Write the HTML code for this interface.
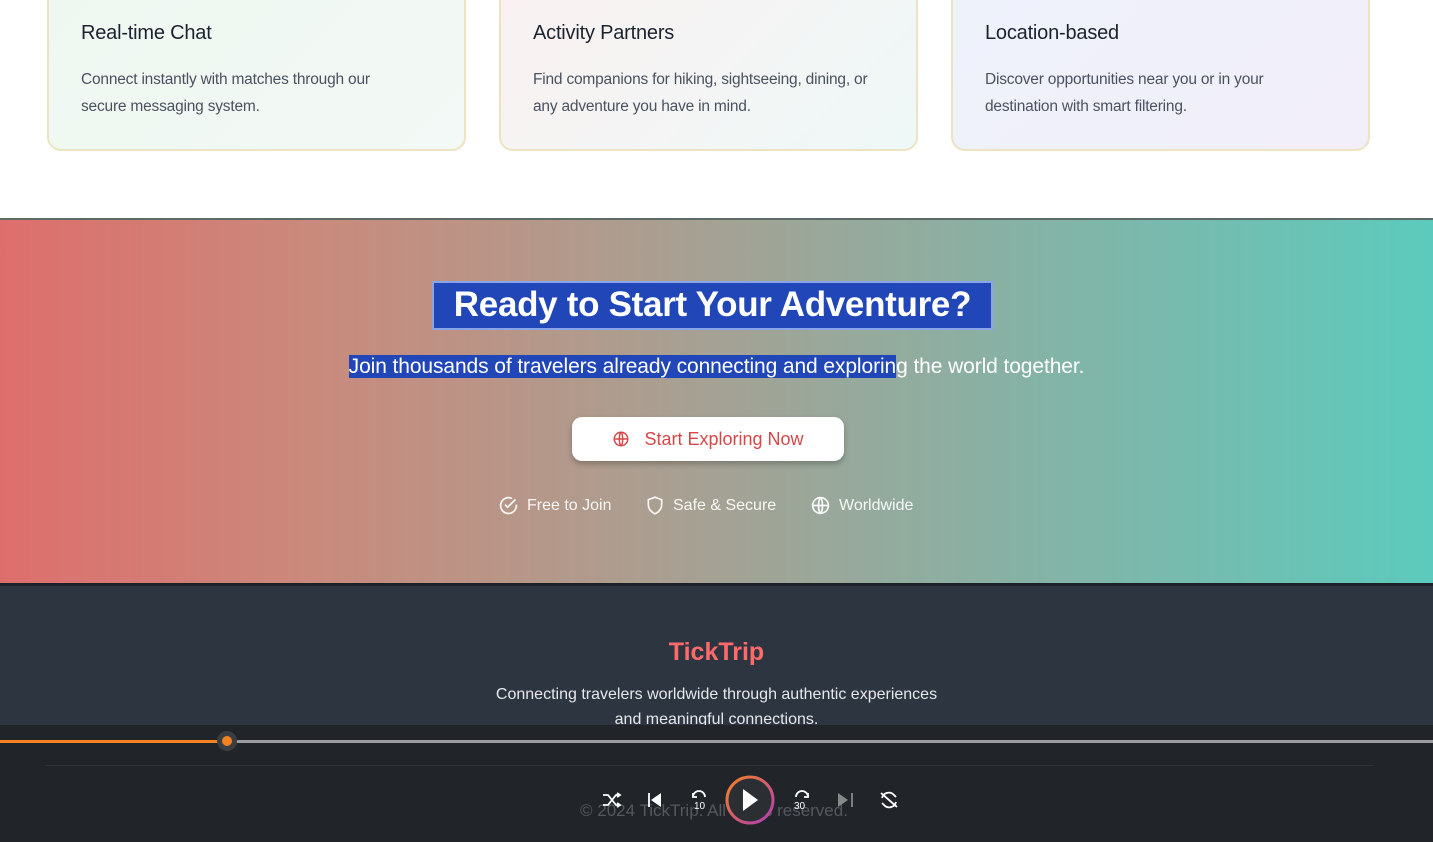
<!DOCTYPE html>
<html><head><meta charset="utf-8"><style>
*{margin:0;padding:0;box-sizing:border-box}
body{width:1433px;height:842px;overflow:hidden;background:#fff;font-family:"Liberation Sans",sans-serif;position:relative}
.card{position:absolute;top:-20px;width:419px;height:171px;border:2px solid #ece3c2;border-radius:14px}
.card h3{position:absolute;top:40px;left:32px;font-size:20px;font-weight:normal;color:#1b2330;letter-spacing:-0.2px}
.card p{position:absolute;top:84px;left:32px;width:330px;font-size:15.5px;line-height:27px;color:#4a5260;letter-spacing:-0.2px}
.cta{position:absolute;top:218px;left:0;width:1433px;height:365px;background:linear-gradient(90deg,#de6e6c 0%,#c98a7c 22%,#ab9e90 45%,#8fada0 65%,#73bdb0 85%,#5ccbbd 100%);border-top:2px solid #5c6b68}
.t{position:absolute;left:432px;top:61px;width:561px;height:49px;background:#2146b8;border:2px solid #8aa4e8;color:#fff;font-size:35px;font-weight:bold;text-align:center;line-height:44px;letter-spacing:-0.3px}
.s{position:absolute;top:135px;left:0;width:1433px;text-align:center;color:#fff;font-size:21px;letter-spacing:-0.1px}
.s span{background:#2146b8}
.btn{position:absolute;left:572px;top:197px;width:272px;height:44px;background:#fff;border-radius:10px;box-shadow:0 3px 6px rgba(0,0,0,.25);color:#d64848;font-size:18px;display:flex;align-items:center;justify-content:center;gap:14px}
.feat{position:absolute;top:275px;color:#fff;font-size:16px;display:flex;align-items:center;gap:8px;opacity:.92}
.foot{position:absolute;top:583px;left:0;width:1433px;height:142px;background:#2d3540;border-top:3px solid #1c2027}
.logo{position:absolute;top:52px;width:100%;text-align:center;color:#ff6b6b;font-size:25px;font-weight:bold}
.fp{position:absolute;top:96px;width:100%;text-align:center;color:#e6e8ea;font-size:16px;line-height:25px}
.player{position:absolute;top:725px;left:0;width:1433px;height:117px;background:#212428}
</style></head><body>
<div class="card" style="left:47px;background:linear-gradient(135deg,#eef8f0,#f3f9f6)"><h3>Real-time Chat</h3><p>Connect instantly with matches through our secure messaging system.</p></div>
<div class="card" style="left:499px;background:linear-gradient(135deg,#faf1f1,#eef8f7)"><h3>Activity Partners</h3><p style="width:355px">Find companions for hiking, sightseeing, dining, or any adventure you have in mind.</p></div>
<div class="card" style="left:951px;background:linear-gradient(135deg,#eef2fb,#f2eefa)"><h3>Location-based</h3><p>Discover opportunities near you or in your destination with smart filtering.</p></div>

<div class="cta">
<div class="t">Ready to Start Your Adventure?</div>
<div class="s"><span>Join thousands of travelers already connecting and explorin</span>g the world together.</div>
<div class="btn"><svg width="18" height="18" viewBox="0 0 24 24" fill="none" stroke="#d64848" stroke-width="2"><circle cx="12" cy="12" r="9"/><path d="M3 12h18M12 3c3 3 3 15 0 18M12 3c-3 3-3 15 0 18"/></svg>Start Exploring Now</div>
<div class="feat" style="left:498px"><svg width="21" height="21" viewBox="0 0 24 24" fill="none" stroke="#fff" stroke-width="2"><path d="M21 11v1a9 9 0 1 1-5-8"/><path d="M8 11l3 3 9-9"/></svg>Free to Join</div>
<div class="feat" style="left:645px"><svg width="20" height="21" viewBox="0 0 24 24" fill="none" stroke="#fff" stroke-width="2"><path d="M12 2l8 3v6c0 5-3.5 9-8 11-4.5-2-8-6-8-11V5z"/></svg>Safe &amp; Secure</div>
<div class="feat" style="left:810px"><svg width="21" height="21" viewBox="0 0 24 24" fill="none" stroke="#fff" stroke-width="2"><circle cx="12" cy="12" r="9"/><path d="M3 12h18M12 3c3 3 3 15 0 18M12 3c-3 3-3 15 0 18"/></svg>Worldwide</div>
</div>

<div class="foot"><div class="logo">TickTrip</div><div class="fp">Connecting travelers worldwide through authentic experiences<br>and meaningful connections.</div></div>

<div class="player">
<div style="position:absolute;top:15px;left:0;width:227px;height:3px;background:#f58220"></div>
<div style="position:absolute;top:15px;left:227px;width:1206px;height:3px;background:#9a9c9e"></div>
<div style="position:absolute;top:6px;left:217px;width:20px;height:20px;border-radius:50%;background:#3a3d42"></div>
<div style="position:absolute;top:11px;left:222px;width:10px;height:10px;border-radius:50%;background:#f58220"></div>
<div style="position:absolute;top:40px;left:45px;width:1328px;height:1px;background:#2f3238"></div>
<div style="position:absolute;top:76px;left:580px;width:260px;color:#55585d;font-size:17px;white-space:nowrap">© 2024 TickTrip. All rights reserved.</div>
<svg style="position:absolute;left:600px;top:45px" width="300" height="60" viewBox="600 770 300 60">
<g stroke="#fff" stroke-width="1.8" fill="none">
<path d="M603 795l5 0 8 10h4M603 805h5l8-10h4M617 793l3 2-3 2M617 803l3 2-3 2"/>
<path d="M649 793v14"/>
<path d="M693 797a6 6 0 1 1 12 0" /><path d="M693 793v4h4"/>
<path d="M808 797a6 6 0 1 0-12 0"/><path d="M808 793v4h-4"/>
<path d="M852 793v14" stroke="#888"/>
<path d="M882 798a7 7 0 0 1 12-3l2 2M896 802a7 7 0 0 1-12 3l-2-2M881 793l16 14"/>
</g>
<path d="M651 800l10-7v14z" fill="#fff"/>
<path d="M838 793l10 7-10 7z" fill="#888"/>
<text x="694" y="809" fill="#fff" font-size="10" font-family="Liberation Sans">10</text>
<text x="794" y="809" fill="#fff" font-size="10" font-family="Liberation Sans">30</text>
<defs><linearGradient id="g" x1="0" y1="0" x2="1" y2="1"><stop offset="0" stop-color="#f58220"/><stop offset="1" stop-color="#b03bb8"/></linearGradient></defs>
<circle cx="750" cy="800" r="23" fill="#2b2e33" stroke="url(#g)" stroke-width="3"/>
<path d="M743 789l15 11-15 11z" fill="#fff"/>
</svg>
</div>
</body></html>
